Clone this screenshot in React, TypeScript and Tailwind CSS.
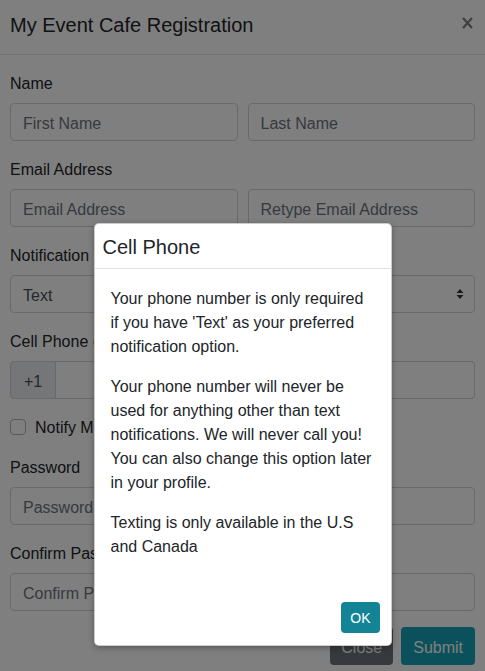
import React from "react";

const inputCls =
  "h-[38px] w-full rounded-[4px] border border-[#ced4da] bg-white px-[12px] pt-[4px] text-[16px] text-[#495057] placeholder:text-[#6c757d] outline-none";

function Label({ children }: { children: React.ReactNode }) {
  return <div className="mb-[7px] pt-[1px] text-[16px] leading-[24px]">{children}</div>;
}

export default function App() {
  return (
    <div className="relative h-[671px] w-[485px] overflow-hidden bg-white font-['Liberation_Sans',Arial,sans-serif] text-[#212529]">
      {/* Outer modal */}
      <div className="flex items-start justify-between border-b border-[#dee2e6] px-[10px] pb-[17px] pt-[13px]">
        <h5 className="text-[20px] font-medium leading-[24px]">My Event Cafe Registration</h5>
        <svg width="11" height="12" viewBox="0 0 11 12" className="mr-[2px] mt-[4px] opacity-50">
          <path d="M1 1 L10 11 M10 1 L1 11" stroke="#000" strokeWidth="2.2" />
        </svg>
      </div>
      <div className="px-[10px] pt-[16px]">
        <div className="mb-[16px]">
          <Label>Name</Label>
          <div className="grid grid-cols-2 gap-[10px]">
            <input className={inputCls} placeholder="First Name" />
            <input className={inputCls} placeholder="Last Name" />
          </div>
        </div>
        <div className="mb-[16px]">
          <Label>Email Address</Label>
          <div className="grid grid-cols-2 gap-[10px]">
            <input className={inputCls} placeholder="Email Address" />
            <input className={inputCls} placeholder="Retype Email Address" />
          </div>
        </div>
        <div className="mb-[16px]">
          <Label>Notification Preference</Label>
          <div className="flex h-[38px] items-center justify-between rounded-[4px] border border-[#ced4da] bg-white pl-[12px] pr-[10px] text-[16px] text-[#495057]">
            <span className="pt-[4px]">Text</span>
            <svg width="8" height="12" viewBox="0 0 8 12">
              <path d="M4 1 L7.5 5 L0.5 5 Z M4 11 L0.5 7 L7.5 7 Z" fill="#343a40" />
            </svg>
          </div>
        </div>
        <div className="mb-[16px]">
          <Label>Cell Phone (Optional)</Label>
          <div className="flex h-[38px]">
            <div className="flex w-[46px] items-center justify-center rounded-l-[4px] border border-[#ced4da] bg-[#e9ecef] pt-[4px] text-[16px] text-[#495057]">
              +1
            </div>
            <input className="h-[38px] flex-1 rounded-r-[4px] border border-l-0 border-[#ced4da] bg-white px-[12px] text-[16px] outline-none" />
          </div>
        </div>
        <div className="mb-[16px] flex h-[24px] items-center gap-[9px]">
          <span className="h-[16px] w-[16px] rounded-[4px] border border-[#adb5bd] bg-white" />
          <span className="pt-[2px] text-[16px] leading-[24px]">Notify Me About Events</span>
        </div>
        <div className="mb-[16px]">
          <Label>Password</Label>
          <input className={inputCls} placeholder="Password" />
        </div>
        <div>
          <Label>Confirm Password</Label>
          <input className={inputCls} placeholder="Confirm Password" />
        </div>
        <div className="mt-[16px] flex justify-end gap-[8px]">
          <button className="h-[38px] rounded-[4px] bg-[#6c757d] px-[11px] pt-[3px] text-[16px] text-white">Close</button>
          <button className="h-[38px] rounded-[4px] bg-[#17a2b8] px-[12px] pt-[3px] text-[16px] text-white">Submit</button>
        </div>
      </div>

      {/* Backdrop + inner modal */}
      <div className="absolute inset-0 flex items-start justify-center bg-black/50 pt-[223px]">
        <div className="w-[298px] rounded-[5px] border border-black/20 bg-white shadow-[0_2px_6px_rgba(0,0,0,0.3)]">
          <div className="border-b border-[#dee2e6] px-[8px] pb-[9px] pt-[11px]">
            <h5 className="text-[20px] font-medium leading-[24px]">Cell Phone</h5>
          </div>
          <div className="px-[16px] pb-[16px] pt-[18px] text-[16px] leading-[24px]">
            <p className="mb-[16px]">
              Your phone number is only required if you have 'Text' as your preferred notification option.
            </p>
            <p className="mb-[16px]">
              Your phone number will never be used for anything other than text notifications. We will never call
              you! You can also change this option later in your profile.
            </p>
            <p className="mb-[16px]">Texting is only available in the U.S and Canada</p>
          </div>
          <div className="flex justify-end px-[11px] pb-[12px] pt-[11px]">
            <button className="h-[31px] rounded-[4px] bg-[#138496] px-[9px] pt-[2px] text-[14px] text-white">OK</button>
          </div>
        </div>
      </div>
    </div>
  );
}
